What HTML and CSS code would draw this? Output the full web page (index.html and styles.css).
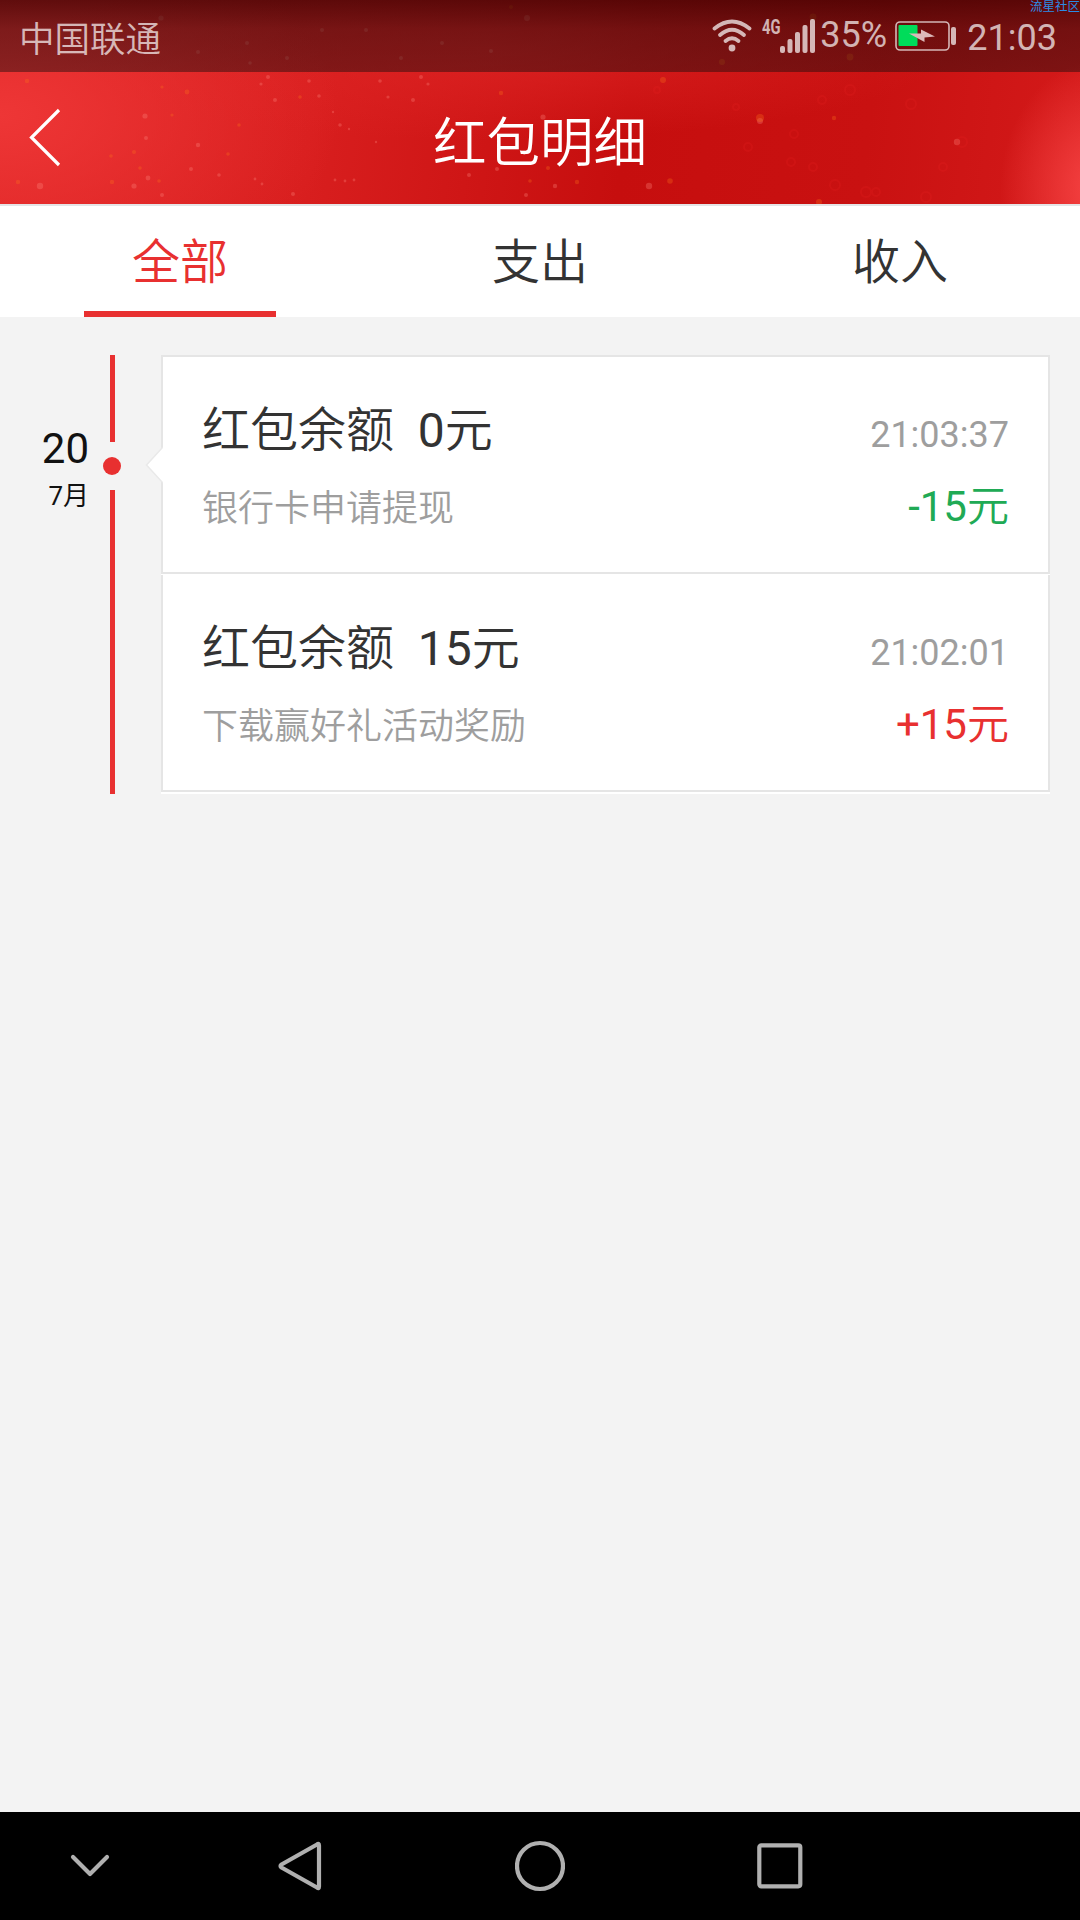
FILE: index.html
```
<!DOCTYPE html>
<html lang="zh-CN">
<head>
  <meta charset="utf-8">
  <title>红包明细</title>
  <link rel="stylesheet" href="styles.css">
</head>
<body>
  <div class="page">
    <div class="top">
      <svg class="sparkles" viewBox="0 0 1080 204">
        <g fill="#ff8a80" opacity="0.3">
          <circle cx="40" cy="186" r="3.2"/><circle cx="134" cy="186" r="2.6"/><circle cx="145" cy="116" r="2.6"/>
          <circle cx="146" cy="138" r="2"/><circle cx="148" cy="178" r="2.4"/><circle cx="161" cy="18" r="2.6"/>
          <circle cx="162" cy="195" r="2"/><circle cx="191" cy="169" r="2"/><circle cx="198" cy="145" r="2.2"/>
          <circle cx="198" cy="52" r="2"/><circle cx="219" cy="175" r="1.8"/><circle cx="247" cy="43" r="2"/>
          <circle cx="250" cy="63" r="1.8"/><circle cx="268" cy="77" r="2"/><circle cx="261" cy="84" r="1.6"/>
          <circle cx="275" cy="100" r="2"/><circle cx="287" cy="58" r="2"/><circle cx="293" cy="194" r="2"/>
          <circle cx="309" cy="81" r="1.8"/><circle cx="319" cy="96" r="1.8"/><circle cx="322" cy="30" r="2"/>
          <circle cx="340" cy="125" r="1.8"/><circle cx="366" cy="30" r="2"/><circle cx="380" cy="81" r="1.8"/>
          <circle cx="388" cy="97" r="1.6"/><circle cx="413" cy="100" r="2"/><circle cx="401" cy="58" r="2"/>
          <circle cx="421" cy="77" r="2"/><circle cx="428" cy="84" r="1.6"/><circle cx="442" cy="43" r="2"/>
          <circle cx="491" cy="51" r="2"/><circle cx="527" cy="18" r="3"/><circle cx="469" cy="175" r="2"/>
          <circle cx="497" cy="169" r="2"/><circle cx="526" cy="195" r="2"/><circle cx="543" cy="117" r="2.6"/>
          <circle cx="555" cy="186" r="2.2"/><circle cx="649" cy="186" r="3.2"/><circle cx="760" cy="121" r="3"/>
          <circle cx="957" cy="142" r="3.2"/><circle cx="335" cy="180" r="1.4"/><circle cx="345" cy="181" r="1.4"/>
          <circle cx="354" cy="180" r="1.4"/><circle cx="262" cy="184" r="1.4"/><circle cx="255" cy="179" r="1.4"/>
          <circle cx="333" cy="112" r="1.2"/><circle cx="349" cy="129" r="1.2"/><circle cx="376" cy="142" r="1.2"/>
        </g>
        <g fill="#ff7a1a" opacity="0.28">
          <circle cx="27" cy="81" r="2.2"/><circle cx="18" cy="182" r="2.2"/><circle cx="112" cy="182" r="2.2"/>
          <circle cx="111" cy="156" r="1.8"/><circle cx="134" cy="152" r="2"/><circle cx="140" cy="168" r="1.8"/>
          <circle cx="159" cy="181" r="1.8"/><circle cx="162" cy="87" r="1.6"/><circle cx="187" cy="92" r="2.4"/>
          <circle cx="172" cy="115" r="1.6"/><circle cx="239" cy="125" r="1.8"/><circle cx="228" cy="154" r="1.8"/>
          <circle cx="300" cy="97" r="1.8"/><circle cx="448" cy="125" r="1.8"/><circle cx="501" cy="93" r="2.2"/>
          <circle cx="530" cy="181" r="1.8"/><circle cx="577" cy="182" r="2.2"/><circle cx="548" cy="168" r="2"/>
          <circle cx="663" cy="80" r="3"/><circle cx="670" cy="181" r="2.8"/><circle cx="760" cy="118" r="4"/>
          <circle cx="834" cy="118" r="2.2"/><circle cx="819" cy="202" r="3"/><circle cx="722" cy="62" r="3"/>
          <circle cx="850" cy="57" r="3.4"/><circle cx="813" cy="17" r="3.4"/><circle cx="511" cy="7" r="2"/>
        </g>
        <g fill="none" stroke="#f02525" stroke-width="2" opacity="0.18">
          <circle cx="822" cy="100" r="4"/><circle cx="850" cy="90" r="5"/><circle cx="736" cy="107" r="3"/>
          <circle cx="748" cy="147" r="4"/><circle cx="794" cy="134" r="4"/><circle cx="791" cy="162" r="4"/>
          <circle cx="813" cy="167" r="4"/><circle cx="835" cy="185" r="5"/><circle cx="866" cy="192" r="5"/>
          <circle cx="876" cy="192" r="4"/><circle cx="962" cy="142" r="5"/><circle cx="943" cy="167" r="4"/>
          <circle cx="926" cy="197" r="5"/><circle cx="911" cy="104" r="5"/><circle cx="657" cy="90" r="3"/>
        </g>
      </svg>

      <div class="status-bar">
        <span class="carrier">中国联通</span>
        <svg class="wifi" width="40" height="34" viewBox="0 0 40 34">
          <g fill="none" stroke="currentColor" stroke-width="3.8" stroke-linecap="round">
            <path d="M2.500 9.500Q20 -4.500 37.500 9.500"/>
            <path d="M8 16Q20 5.500 32 16"/>
            <path d="M13.500 22Q20 16.500 26.500 22"/>
          </g>
          <circle cx="20" cy="29" r="3.4" fill="currentColor"/>
        </svg>
        <span class="network">4G</span>
        <svg class="signal" width="35" height="34" viewBox="0 0 35 34" fill="currentColor">
          <rect x="0" y="27" width="5" height="7" rx="2"/>
          <rect x="7.500" y="20" width="5" height="14" rx="2"/>
          <rect x="15" y="13" width="5" height="21" rx="2"/>
          <rect x="22.500" y="6" width="5" height="28" rx="2"/>
          <rect x="30" y="0" width="5" height="34" rx="2"/>
        </svg>
        <span class="percent">35%</span>
        <svg class="battery" width="62" height="30" viewBox="0 0 62 30">
          <rect x="1" y="1" width="53" height="28" rx="4" fill="none" stroke="currentColor" stroke-width="1.6"/>
          <rect x="3.500" y="4" width="19" height="21" rx="1" fill="#00dc5a"/>
          <rect x="56" y="6" width="5" height="18" rx="2" fill="currentColor"/>
          <path d="M14 12.500L26 12.500L26 8.500L40 15.500L29.500 16.500L29.500 21Z" fill="#dcb9b9"/>
        </svg>
        <span class="clock">21:03</span>
      </div>
      <span class="watermark">流星社区</span>

      <div class="header">
        <svg class="back" width="32" height="60" viewBox="0 0 32 60">
          <path d="M30 3L2.500 30.500L30 58" fill="none" stroke="#fff" stroke-width="3.2"/>
        </svg>
        <h1 class="title">红包明细</h1>
      </div>
    </div>

    <div class="tabs">
      <div class="tab active">全部</div>
      <div class="tab">支出</div>
      <div class="tab">收入</div>
    </div>

    <div class="timeline">
      <div class="date">
        <div class="day">20</div>
        <div class="month">7月</div>
      </div>
      <div class="axis">
        <div class="line line-top"></div>
        <div class="dot"></div>
        <div class="line line-bottom"></div>
      </div>
      <div class="records">
        <svg class="pointer" width="18" height="38" viewBox="0 0 18 38">
          <path d="M18 1L1.500 19L18 37" fill="#fff" stroke="#e9e9e9" stroke-width="1.5"/>
        </svg>
        <div class="record">
          <div class="row">
            <span class="balance">红包余额<span class="num">&nbsp; 0</span>元</span>
            <span class="time">21:03:37</span>
          </div>
          <div class="row">
            <span class="desc">银行卡申请提现</span>
            <span class="amount out"><span class="num">-15</span>元</span>
          </div>
        </div>
        <div class="record">
          <div class="row">
            <span class="balance">红包余额<span class="num">&nbsp; 15</span>元</span>
            <span class="time">21:02:01</span>
          </div>
          <div class="row">
            <span class="desc">下载赢好礼活动奖励</span>
            <span class="amount in"><span class="num">+15</span>元</span>
          </div>
        </div>
      </div>
    </div>

    <div class="nav-bar">
      <div class="nav-item nav-side">
        <svg width="40" height="24" viewBox="0 0 40 24"><path d="M3 3L20 20L37 3"/></svg>
      </div>
      <div class="nav-item">
        <svg width="44" height="52" viewBox="0 0 44 52"><path d="M39 4.500Q41 3 41 5.500V46.500Q41 49 39 47.500L3.500 27.500Q1.500 26 3.500 24.500Z"/></svg>
      </div>
      <div class="nav-item">
        <svg width="50" height="52" viewBox="0 0 50 52"><circle cx="25" cy="26" r="23"/></svg>
      </div>
      <div class="nav-item">
        <svg width="46" height="46" viewBox="0 0 46 46"><rect x="2.300" y="2.300" width="41" height="41" rx="2"/></svg>
      </div>
      <div class="nav-item nav-side"></div>
    </div>
  </div>
</body>
</html>
```

FILE: styles.css
```
* {
  box-sizing: border-box;
}

body {
  margin: 0;
  font-family: Roboto, "Noto Sans CJK SC", sans-serif;
  color: #333;
  background-color: #f3f3f3;
}

.page {
  display: flex;
  flex-direction: column;
  width: 1080px;
  height: 1920px;
  overflow: hidden;
}

/* top area */
.top {
  position: relative;
  height: 204px;
  background:
    radial-gradient(ellipse 100px 130px at 1100px 190px, #f84545, rgba(248, 64, 64, 0)),
    radial-gradient(ellipse 340px 200px at 0 115px, #ee3636, rgba(230, 45, 45, 0)),
    radial-gradient(ellipse 460px 90px at 490px 50px, rgba(222, 36, 36, 0.8), rgba(216, 30, 30, 0)),
    linear-gradient(97deg, #dc2323 0%, #d81e1e 30%, #c60e0e 58%, #c91111 80%, #d41a1a 100%);
}

.sparkles {
  position: absolute;
  top: 0;
  left: 0;
  width: 1080px;
  height: 204px;
}

.status-bar {
  position: relative;
  display: flex;
  height: 72px;
  padding-left: 19px;
  padding-right: 23px;
  font-size: 36px;
  line-height: 42px;
  color: rgba(255, 255, 255, 0.7);
  background: linear-gradient(rgba(40, 0, 0, 0.7), rgba(22, 8, 8, 0.5) 40%, rgba(22, 12, 12, 0.45));
}

.carrier {
  flex: 1;
  padding-top: 19px;
  font-size: 35.5px;
  font-weight: 350;
}

.wifi {
  margin-top: 19px;
  margin-right: 10px;
}

.network {
  width: 18px;
  margin-top: 17px;
  font-size: 21px;
  line-height: 21px;
  font-weight: 700;
  transform: scaleX(0.7);
  transform-origin: left;
}

.signal {
  margin-top: 19px;
  margin-right: 5px;
}

.percent {
  width: 67px;
  margin-top: 14px;
  margin-right: 8px;
}

.battery {
  margin-top: 21px;
  margin-right: 10px;
}

.clock {
  margin-top: 17px;
}

.watermark {
  position: absolute;
  top: 0;
  right: 0;
  font-size: 12.5px;
  line-height: 14px;
  color: #2b8ce6;
}

.header {
  position: relative;
  display: flex;
  align-items: center;
  justify-content: center;
  height: 132px;
}

.back {
  position: absolute;
  left: 29px;
  top: 35px;
}

.title {
  margin: 0;
  padding-top: 12px;
  font-size: 53.5px;
  font-weight: 350;
  line-height: 64px;
  color: #fff;
}

/* tabs */
.tabs {
  display: flex;
  height: 113px;
  border-top: 2px solid #e4e4e6;
  background-color: #fff;
}

.tab {
  width: 192px;
  margin: 0 84px;
  padding-top: 4px;
  font-size: 48px;
  font-weight: 350;
  line-height: 106px;
  height: 111px;
  text-align: center;
}

.tab.active {
  color: #e83030;
  border-bottom: 6px solid #e83030;
}

/* timeline */
.timeline {
  display: flex;
  flex: 1;
  align-items: flex-start;
  padding: 38px 30px 0 0;
}

.date {
  width: 89px;
  padding-top: 70px;
  text-align: right;
  color: #111;
}

.day {
  font-size: 42px;
  line-height: 48px;
}

.month {
  font-size: 26px;
  line-height: 38px;
  padding-top: 4px;
}

.axis {
  display: flex;
  flex-direction: column;
  align-items: center;
  width: 47px;
  height: 439px;
}

.line {
  width: 5px;
  background-color: #e83030;
}

.line-top {
  height: 87px;
}

.line-bottom {
  flex: 1;
}

.dot {
  width: 18px;
  height: 18px;
  margin: 15px 1px 15px 0;
  border-radius: 50%;
  background-color: #e83030;
}

.records {
  position: relative;
  flex: 1;
  margin-left: 25px;
  padding-bottom: 2px;
  background-color: #fff;
}

.pointer {
  position: absolute;
  left: -16px;
  top: 91px;
}

.record {
  height: 217px;
  margin-top: 1px;
  padding: 37px 39px 0;
  border: 2px solid #e5e5e5;
  border-top: none;
}

.record:nth-child(2) {
  height: 219px;
  margin-top: 0;
  border-top: 2px solid #e5e5e5;
}

.row {
  display: flex;
  align-items: baseline;
  justify-content: space-between;
  height: 76px;
  line-height: 74px;
}

.balance {
  font-size: 48px;
  font-weight: 350;
}

.num {
  font-weight: 400;
}

.time {
  font-size: 36px;
  color: #9e9e9e;
}

.desc {
  font-size: 36px;
  font-weight: 350;
  color: #9e9e9e;
}

.amount {
  font-size: 42px;
  font-weight: 350;
}

.out {
  color: #20aa55;
}

.in {
  color: #e83030;
}

/* bottom navigation */
.nav-bar {
  display: flex;
  height: 108px;
  background-color: #000;
}

.nav-item {
  display: flex;
  align-items: center;
  justify-content: center;
  width: 240px;
}

.nav-side {
  width: 180px;
}

.nav-item svg {
  fill: none;
  stroke: #b0b0b0;
  stroke-width: 4.2;
  stroke-linecap: round;
  stroke-linejoin: round;
}
```
